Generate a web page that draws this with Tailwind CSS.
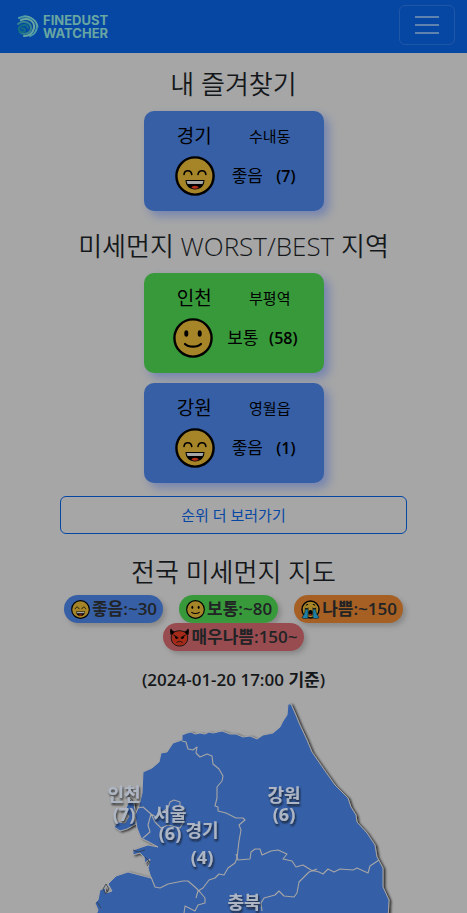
<!DOCTYPE html>
<html lang="ko">
<head>
<meta charset="utf-8">
<meta name="viewport" content="width=device-width, initial-scale=1">
<title>FINEDUST WATCHER</title>
<script src="https://cdn.jsdelivr.net/npm/@tailwindcss/browser@4"></script>
</head>
<body class="overflow-x-hidden bg-[#a6a6a6] font-['Open_Sans','Noto_Sans_CJK_KR',sans-serif] text-[#15181b]">
<svg class="hidden" aria-hidden="true">
  <symbol id="grin" viewBox="0 0 40 40">
    <circle cx="20" cy="20" r="18.6" fill="#a68428" stroke="#000" stroke-width="2.4"/>
    <path d="M9 18.5c.5-5 7-5 7.8 0M23 18.5c.7-5 7.3-5 7.9 0" fill="none" stroke="#000" stroke-width="1.6" stroke-linecap="round"/>
    <path d="M10.5 24h19c0 5.800-4 9.500-9.500 9.500s-9.500-3.700-9.500-9.500z" fill="#000"/>
    <path d="M11.500 25h17l-1 3h-15z" fill="#a6a6a6"/>
    <path d="M16.500 32c0-3 7-3 7 0-2 1-5 1-7 0z" fill="#b52f18"/>
  </symbol>
  <symbol id="smile" viewBox="0 0 40 40">
    <circle cx="20" cy="20" r="18.600" fill="#a68428" stroke="#000" stroke-width="2.4"/>
    <ellipse cx="13.300" cy="15.500" rx="2" ry="3.300"/><ellipse cx="26.700" cy="15.500" rx="2" ry="3.300"/>
    <path d="M12 26c3.500 3.500 12.500 3.500 16 0" fill="none" stroke="#000" stroke-width="2.200" stroke-linecap="round"/>
  </symbol>
  <symbol id="cry" viewBox="0 0 40 40">
    <circle cx="20" cy="20" r="18" fill="#a68428" stroke="#000" stroke-width="3"/>
    <path d="M9 19h6v19c-5 2-11 1-13-1 2-4 7-8 7-18zM31 19h-6v19c5 2 11 1 13-1-2-4-7-8-7-18z" fill="#1d7fa3" stroke="#000" stroke-width="1"/>
    <path d="M8 17c3 2 6 2 8 0M24 17c2 2 5 2 8 0M10 11l5-2M30 11l-5-2" fill="none" stroke="#000" stroke-width="2"/>
    <ellipse cx="20" cy="27" rx="4.500" ry="6"/><path d="M17 31q3-3 6 0l-3 2z" fill="#b52f18"/>
  </symbol>
  <symbol id="devil" viewBox="0 0 40 40">
    <path d="M2 2c1 3 4 5 8 6 6-3 14-3 20 0 4-1 7-3 8-6 2 6 1 10-1 14 2 13-5 22-17 22S1 29 3 16C1 12 0 8 2 2z" fill="#a62a18" stroke="#111" stroke-width="2"/>
    <path d="M2 2c1 3 4 5 8 6l-6 7C1 11 1 7 2 2zM38 2c-1 3-4 5-8 6l6 7c3-4 3-8 2-13z"/>
    <path d="M8 15l9 5M32 15l-9 5M14 31c3-4 9-4 12 0" fill="none" stroke="#111" stroke-width="2" stroke-linecap="round"/>
    <path d="M10 17l7 4c-1 4-7 3-7-4zM30 17l-7 4c1 4 7 3 7-4z"/>
  </symbol>
</svg>

<header class="flex h-[53px] items-center justify-between bg-[#0747a4] pr-3 pb-[3px] pl-4">
  <a href="#" class="flex items-center gap-1 pt-[3px] font-['Inter',sans-serif] text-[13px] leading-[13px] font-bold text-[#68a6a2]">
    <svg class="size-[23px]" viewBox="0 0 23 23" fill="none" stroke-linecap="round" aria-hidden="true">
      <path d="M3 3C11-1 20 4 21 11c0 5-3 9-7 10" stroke="#4b9aa6" stroke-width="2"/>
      <path d="M5 5c7-3 14 1 13 8-1 5-5 8-10 8" stroke="#69a6a0" stroke-width="2"/>
      <path d="M2 9c5-4 13-2 13 4 0 6-8 7-11 4" stroke="#34848f" stroke-width="2"/>
      <path d="M12 13c0-4-7-4-9 0-1 4 5 6 6 2 0-2-3-2-3-1" stroke="#126e85" stroke-width="2"/>
      <path d="M8 1c8 0 13 5 14 11" stroke="#69a6a0" stroke-width="1"/>
    </svg>
    <span>FINEDUST<br>WATCHER</span>
  </a>
  <button type="button" aria-label="메뉴" class="flex h-10 w-14 items-center justify-center rounded-md border border-[#1f56a6]">
    <svg class="size-[30px]" viewBox="0 0 30 30" stroke="#5f83b0" stroke-width="2" aria-hidden="true"><path d="M3 7h24M3 15h24M3 23h24"/></svg>
  </button>
</header>

<main class="text-center">
  <section class="flex flex-col items-center pt-[13px]">
    <h2 class="mb-[9px] text-[26px] leading-9 font-[350]">내 즐겨찾기</h2>
    <article class="flex h-[100px] w-[180px] flex-col rounded-[10px] bg-[#365fa6] pt-[13px] text-black shadow-[5px_5px_10px_#7584b0]">
      <div class="grid grid-cols-2 items-center pr-4 pl-[13px] leading-6"><h3 class="text-[19px]">경기</h3><p class="text-[15px] whitespace-nowrap">수내동</p></div>
      <div class="mt-2 flex items-center justify-between pr-7 pl-[31px]"><svg class="mr-1 size-10" aria-hidden="true"><use href="#grin"/></svg><span class="text-[17px]">좋음</span><span class="font-semibold">(7)</span></div>
    </article>
  </section>

  <section class="flex flex-col items-center pt-[17px]">
    <h2 class="mb-[9px] text-[26px] leading-9 font-[350]">미세먼지 WORST/BEST 지역</h2>
    <div class="flex flex-col gap-[10px]">
      <article class="flex h-[100px] w-[180px] flex-col rounded-[10px] bg-[#38993b] pt-[13px] text-black shadow-[5px_5px_10px_#7584b0]">
        <div class="grid grid-cols-2 items-center pr-4 pl-[13px] leading-6"><h3 class="text-[19px]">인천</h3><p class="text-[15px] whitespace-nowrap">부평역</p></div>
        <div class="mt-2 flex items-center justify-between pr-[26px] pl-[29px]"><svg class="mr-1 size-10" aria-hidden="true"><use href="#smile"/></svg><span class="text-[17px]">보통</span><span class="font-semibold">(58)</span></div>
      </article>
      <article class="flex h-[100px] w-[180px] flex-col rounded-[10px] bg-[#365fa6] pt-[13px] text-black shadow-[5px_5px_10px_#7584b0]">
        <div class="grid grid-cols-2 items-center pr-4 pl-[13px] leading-6"><h3 class="text-[19px]">강원</h3><p class="text-[15px] whitespace-nowrap">영월읍</p></div>
        <div class="mt-2 flex items-center justify-between pr-7 pl-[31px]"><svg class="mr-1 size-10" aria-hidden="true"><use href="#grin"/></svg><span class="text-[17px]">좋음</span><span class="font-semibold">(1)</span></div>
      </article>
    </div>
    <div class="mt-[13px] w-full px-[60px]">
      <button type="button" class="h-[38px] w-full rounded-md border border-[#0747a4] text-[15px] text-[#0747a4]">순위 더 보러가기</button>
    </div>
  </section>

  <section class="pt-5">
    <h2 class="mb-[5px] text-[26px] leading-9 font-[350]">전국 미세먼지 지도</h2>
    <ul class="flex flex-wrap justify-center gap-x-4 px-[60px] text-[17px] leading-7 font-semibold text-[#212325]">
      <li class="flex items-center gap-[2px] rounded-full bg-[#365fa6] pr-[6px] pl-[7px] shadow-[3px_3px_5px_#888]"><svg class="size-[19px]" aria-hidden="true"><use href="#grin"/></svg>좋음:~30</li>
      <li class="flex items-center gap-[2px] rounded-full bg-[#38993b] pr-[6px] pl-[7px] shadow-[3px_3px_5px_#888]"><svg class="size-[19px]" aria-hidden="true"><use href="#smile"/></svg>보통:~80</li>
      <li class="flex items-center gap-[2px] rounded-full bg-[#a66023] pr-[6px] pl-[7px] shadow-[3px_3px_5px_#888]"><svg class="size-[19px]" aria-hidden="true"><use href="#cry"/></svg>나쁨:~150</li>
      <li class="flex items-center gap-[2px] rounded-full bg-[#994c50] pr-[6px] pl-[7px] shadow-[3px_3px_5px_#888]"><svg class="size-[19px]" aria-hidden="true"><use href="#devil"/></svg>매우나쁨:150~</li>
    </ul>
    <p class="mt-[17px] mb-2 text-[17px] leading-6 font-semibold">(2024-01-20 17:00 기준)</p>
    <svg class="block w-full" viewBox="0 700 467 213" role="img" aria-label="전국 미세먼지 지도">
      <defs>
        <filter id="ms" x="-10%" y="-10%" width="120%" height="120%"><feDropShadow dx="2" dy="1" stdDeviation="1" flood-color="#222" flood-opacity=".9"/></filter>
        <filter id="ts" x="-30%" y="-30%" width="170%" height="170%"><feDropShadow dx="1" dy="2" stdDeviation="1.2" flood-color="#111" flood-opacity=".8"/></filter>
      </defs>
      <g filter="url(#ms)" fill="#365fa6" stroke="#a6a6a6" stroke-width="1" stroke-linejoin="round">
        <path d="M182 735l5-2 4-1 4 2 5-1 5 1 4-2 4 1 9-2 8 3 6 0 7 3 7-1 7 3 6-4 10-2 7-6 3-6 4-6 1-11 3 0 4 9 5 12 7 15 5 12 11 16 12 17 13 13 3 9 5 8 1 7 10 11 8 12 2 12 6 11 0 19 6 13-1 20H94L98 910 95 903 98 900 100 890 105 888 106 893 112 891 108 884 116 876 128 872 151 878 148 868 150 859 145 863 144 857 140 853 133 855 133 850 148 845 158 847 149 842 141 838 137 828 135 815 139 806 142 793 143 772 152 768 159 762 161 753 167 752 173 743 182 740z"/>
        <path d="M114 827l4-5 7 1 4-7-4-5 4-10-3-6 8 8 1 8-2 6 3 7-9 5-7 2z"/>
      </g>
      <path d="M106 884l3 5-3 5-3-5zM133 850l5 2 7-2M97 902l4 6M145 857l5 5-3 4" fill="none" stroke="#333b45" stroke-width=".8"/>
      <g fill="none" stroke="#a6a6a6" stroke-width="1.100" stroke-linejoin="round">
        <path d="M182 741l4 1 2 7 5 1 4-3-1 6 4 4 7-3 5 2 1 8 6 5 4 7-1 5-5 6 0 11-2 8 3 1 0 4 8 2 10 5 7 0 2 2-6 5 2 5-2 11-2 17-2 5-7 5-4 7-5-1-4 4-6 2-6 8-5 3-2 7"/>
        <path d="M236 854l2 6 12-1 1-7 4-3 5 0 2 6 9-4 7-1 9 4-4 5 9 2 4 6 7-2 8 5 8 2 4 2 5-5 6 3 6-3 13 1 4-2 11 5 2-7 9-6M317 869l-8 3-10 10-2 11-3 4-10-1-5-5-4 4-11 3-3 5 1 8"/>
        <path d="M151 877l4 10 5 1 8-4 15-3 5 0 7 6 5 5 5 6v5l-7 2-3 6-10-5-1 7"/>
        <path d="M138 808l5-1 8 7-3 11 2 7-7 6M151 814l5 3 12-9 2-6 4-2 6 2v5l4 1-1 15-3 5-12-3-7 3-6-6z"/>
      </g>
      <g filter="url(#ts)" fill="#aeb6c4" class="text-[18px] font-bold" text-anchor="middle">
        <text x="124" y="801">인천</text><text x="124" y="821">(7)</text>
        <text x="170" y="821">서울</text><text x="170" y="840">(6)</text>
        <text x="202" y="837">경기</text><text x="202" y="864">(4)</text>
        <text x="284" y="802">강원</text><text x="284" y="821">(6)</text>
        <text x="244" y="909">충북</text>
      </g>
    </svg>
  </section>
</main>
</body>
</html>
